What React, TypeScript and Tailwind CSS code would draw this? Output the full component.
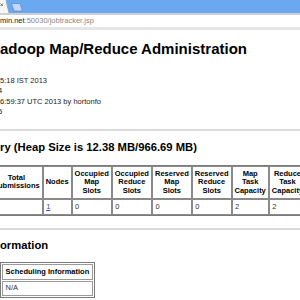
import React from "react";

const font = "font-['Liberation_Sans',Arial,sans-serif]";

function BrowserChrome() {
  return (
    <div>
      <div className="h-[13px] bg-[#6aa9f2]">
        <svg width="300" height="13" viewBox="0 0 300 13">
          {/* active tab */}
          <path d="M0 0 L6 0 L9 13 L0 13 Z" fill="#f6f6f6" />
          <path d="M6 0 L9 13" stroke="#8fa9c9" strokeWidth="1" fill="none" />
          <path d="M0.5 3.5 L3 6 M3 3.5 L0.5 6" stroke="#666" strokeWidth="0.9" />
          {/* new tab button */}
          <path d="M11.5 3.5 L20 3.5 L22.5 11 L14 11 Z" fill="#c2d8f4" stroke="#5d8fcf" strokeWidth="0.8" />
        </svg>
      </div>
      <div className="h-[2px] bg-[#cfcfcf]" />
      <div className="h-[12px] bg-white flex items-center text-[7.5px] leading-[12px] whitespace-nowrap">
        <span className="text-[#222]">min.net</span>
        <span className="text-[#8a8a8a]">:50030/jobtracker.jsp</span>
      </div>
      <div className="h-[3px] bg-[#e6e6e6]" />
    </div>
  );
}

const headers = [
  { label: "Total Submissions", w: "w-[54px]" },
  { label: "Nodes", w: "w-[29px]" },
  { label: "Occupied Map Slots", w: "w-[40px]" },
  { label: "Occupied Reduce Slots", w: "w-[41px]" },
  { label: "Reserved Map Slots", w: "w-[41px]" },
  { label: "Reserved Reduce Slots", w: "w-[41px]" },
  { label: "Map Task Capacity", w: "w-[38px]" },
  { label: "Reduce Task Capacity", w: "w-[36px]" },
];

const values = ["", "1", "0", "0", "0", "0", "2", "2"];

export default function App() {
  return (
    <div className={`w-[300px] h-[300px] overflow-hidden bg-white text-black ${font}`}>
      <BrowserChrome />

      <div className="whitespace-nowrap">
        <h1 className="mt-[10px] text-[15px] leading-[17px] font-bold">
          adoop Map/Reduce Administration
        </h1>

        <div className="mt-[19px] text-[7.5px] leading-[10px] text-[#222]">
          <div>5:18 IST 2013</div>
          <div className="-ml-[2px]">4</div>
          <div className="mt-[1px]">6:59:37 UTC 2013 by hortonfo</div>
          <div className="-ml-[2px]">5</div>
        </div>

        <hr className="mt-[12px] border-0 h-[2px] bg-[#dcdcdc]" />

        <h2 className="mt-[10px] text-[11.25px] leading-[13px] font-bold">
          ry (Heap Size is 12.38 MB/966.69 MB)
        </h2>

        <table className="mt-[11px] -ml-[11px] table-fixed border-separate border-spacing-0 border border-[#7a7a7a] text-[7.5px] leading-[8.5px]">
          <thead>
            <tr>
              {headers.map((h) => (
                <th
                  key={h.label}
                  className={`${h.w} border border-[#8a8a8a] px-[2px] py-[2.5px] font-bold text-center align-middle whitespace-normal`}
                >
                  {h.label}
                </th>
              ))}
            </tr>
          </thead>
          <tbody>
            <tr>
              {values.map((v, i) => (
                <td
                  key={i}
                  className="border border-[#8a8a8a] px-[2.5px] py-[3px] text-left text-[#333]"
                >
                  {i === 1 ? (
                    <a className="text-[#3d3de0] underline">{v}</a>
                  ) : (
                    v || "\u00a0"
                  )}
                </td>
              ))}
            </tr>
          </tbody>
        </table>

        <hr className="mt-[12px] border-0 h-[2px] bg-[#dcdcdc]" />

        <h2 className="mt-[9px] text-[11.25px] leading-[13px] font-bold">ormation</h2>

        <table className="mt-[10px] border-separate border-spacing-[1px] border border-[#7a7a7a] text-[7.5px] leading-[8.5px]">
          <thead>
            <tr>
              <th className="w-[90px] border border-[#9a9a9a] px-[2.5px] py-[2.5px] font-bold text-left">
                Scheduling Information
              </th>
            </tr>
          </thead>
          <tbody>
            <tr>
              <td className="border border-[#9a9a9a] px-[2.5px] py-[2.5px] text-[#333]">N/A</td>
            </tr>
          </tbody>
        </table>
      </div>
    </div>
  );
}
